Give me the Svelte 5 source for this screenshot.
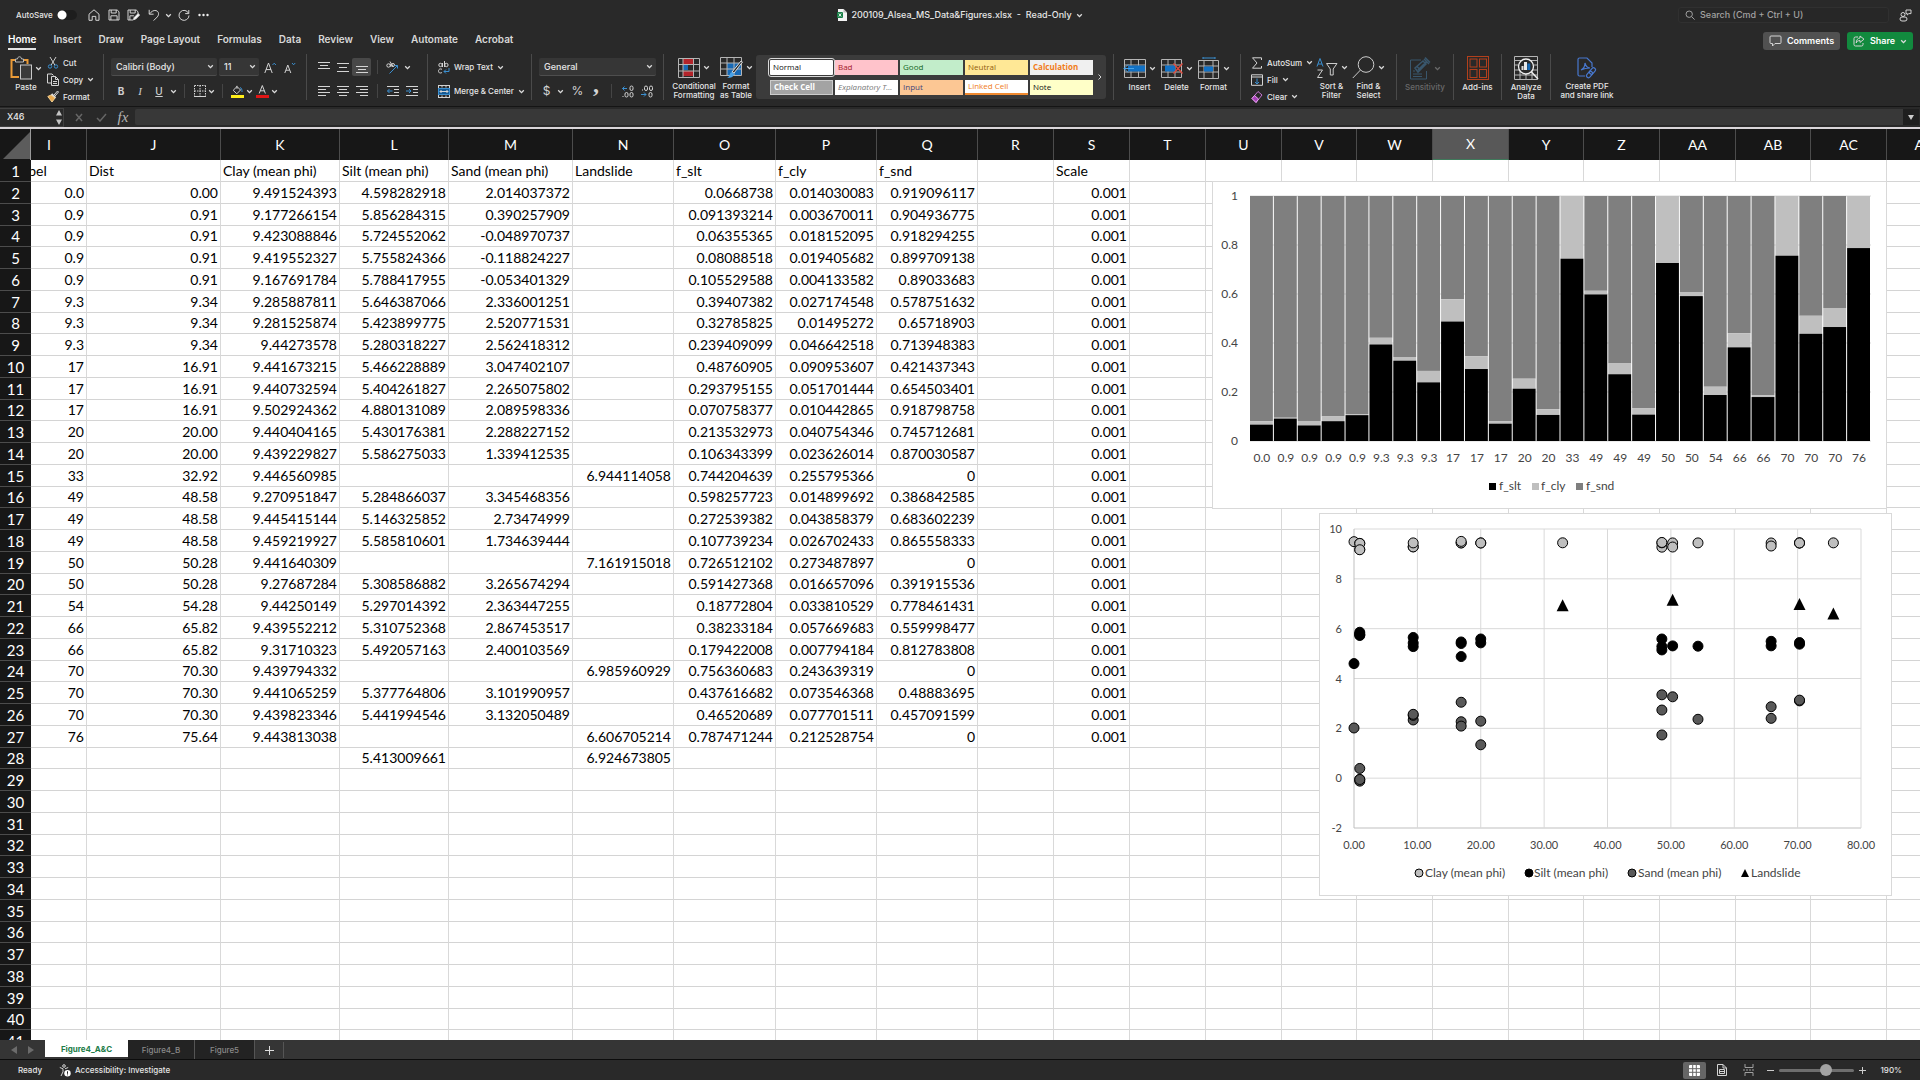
<script>
  const cols = [
    ['I', 56], ['J', 134], ['K', 119], ['L', 109], ['M', 124], ['N', 101], ['O', 102], ['P', 101],
    ['Q', 101], ['R', 76], ['S', 76], ['T', 76], ['U', 76], ['V', 75], ['W', 76], ['X', 76],
    ['Y', 75], ['Z', 76], ['AA', 76], ['AB', 75], ['AC', 76], ['AD', 76]
  ];

  const titles = ['Label', 'Dist', 'Clay (mean phi)', 'Silt (mean phi)', 'Sand (mean phi)', 'Landslide', 'f_slt', 'f_cly', 'f_snd', '', 'Scale'];

  // label, dist, clay, silt, sand, landslide, f_slt, f_cly, f_snd
  const data = `0.0|0.00|9.491524393|4.598282918|2.014037372||0.0668738|0.014030083|0.919096117
0.9|0.91|9.177266154|5.856284315|0.390257909||0.091393214|0.003670011|0.904936775
0.9|0.91|9.423088846|5.724552062|-0.048970737||0.06355365|0.018152095|0.918294255
0.9|0.91|9.419552327|5.755824366|-0.118824227||0.08088518|0.019405682|0.899709138
0.9|0.91|9.167691784|5.788417955|-0.053401329||0.105529588|0.004133582|0.89033683
9.3|9.34|9.285887811|5.646387066|2.336001251||0.39407382|0.027174548|0.578751632
9.3|9.34|9.281525874|5.423899775|2.520771531||0.32785825|0.01495272|0.65718903
9.3|9.34|9.44273578|5.280318227|2.562418312||0.239409099|0.046642518|0.713948383
17|16.91|9.441673215|5.466228889|3.047402107||0.48760905|0.090953607|0.421437343
17|16.91|9.440732594|5.404261827|2.265075802||0.293795155|0.051701444|0.654503401
17|16.91|9.502924362|4.880131089|2.089598336||0.070758377|0.010442865|0.918798758
20|20.00|9.440404165|5.430176381|2.288227152||0.213532973|0.040754346|0.745712681
20|20.00|9.439229827|5.586275033|1.339412535||0.106343399|0.023626014|0.870030587
33|32.92|9.446560985|||6.944114058|0.744204639|0.255795366|0
49|48.58|9.270951847|5.284866037|3.345468356||0.598257723|0.014899692|0.386842585
49|48.58|9.445415144|5.146325852|2.73474999||0.272539382|0.043858379|0.683602239
49|48.58|9.459219927|5.585810601|1.734639444||0.107739234|0.026702433|0.865558333
50|50.28|9.441640309|||7.161915018|0.726512102|0.273487897|0
50|50.28|9.27687284|5.308586882|3.265674294||0.591427368|0.016657096|0.391915536
54|54.28|9.44250149|5.297014392|2.363447255||0.18772804|0.033810529|0.778461431
66|65.82|9.439552212|5.310752368|2.867453517||0.38233184|0.057669683|0.559998477
66|65.82|9.31710323|5.492057163|2.400103569||0.179422008|0.007794184|0.812783808
70|70.30|9.439794332|||6.985960929|0.756360683|0.243639319|0
70|70.30|9.441065259|5.377764806|3.101990957||0.437616682|0.073546368|0.48883695
70|70.30|9.439823346|5.441994546|3.132050489||0.46520689|0.077701511|0.457091599
76|75.64|9.443813038|||6.606705214|0.787471244|0.212528754|0`
    .split('\n')
    .map((line) => line.split('|'));

  const rows = Array.from({ length: 41 }, (_, i) => {
    if (i === 0) return titles;
    if (i <= data.length) return [...data[i - 1], '', '0.001'];
    if (i === 27) return ['', '', '', '5.413009661', '', '6.924673805'];
    return [];
  });

  // stacked bar chart
  const bar = { x: 37, y: 14, w: 621, h: 245 };
  const pitch = bar.w / data.length;
  const by = (v) => bar.y + bar.h * (1 - v);
  const bars = data.map((d, i) => {
    const slt = +d[6];
    return { label: d[0], x: bar.x + i * pitch, slt, top: Math.min(1, slt + +d[7]) };
  });

  // scatter chart
  const sc = { x: 34, y: 15, w: 507, h: 299 };
  const sx = (v) => sc.x + (v / 80) * sc.w;
  const sy = (v) => sc.y + ((10 - v) / 12) * sc.h;
  const points = [2, 3, 4].flatMap((c, k) =>
    data.filter((d) => d[c] !== '').map((d) => ({ x: sx(+d[1]), y: sy(+d[c]), cls: ['clay', 'silt', 'sand'][k] }))
  );
  const slides = data.filter((d) => d[5]).map((d) => ({ x: sx(+d[1]), y: sy(+d[5]) }));
  const tri = (x, y) => `${x - 6},${y + 6} ${x},${y - 6} ${x + 6},${y + 6}`;

  const tabs = ['Home', 'Insert', 'Draw', 'Page Layout', 'Formulas', 'Data', 'Review', 'View', 'Automate', 'Acrobat'];
  const styles = [
    ['Normal', 'normal'], ['Bad', 'bad'], ['Good', 'good'], ['Neutral', 'neutral'], ['Calculation', 'calc'],
    ['Check Cell', 'check'], ['Explanatory T...', 'expl'], ['Input', 'input'], ['Linked Cell', 'linked'], ['Note', 'note']
  ];
</script>

{#snippet chev()}
  <svg class="chev" width="7" height="7" viewBox="0 0 7 7"><path d="M1.2 2.2 3.5 4.6 5.8 2.2" /></svg>
{/snippet}

{#snippet lines(a, b, c, d)}
  <svg class="ic" width="12" height="13" viewBox="0 0 12 13">
    {#each [a, b, c, d].filter(Boolean) as [x, w, y]}<path d="M{x} {y}h{w}" />{/each}
  </svg>
{/snippet}

<div class="app">
  <header class="titlebar">
    <div class="quick">
      <label class="autosave">AutoSave <input type="checkbox" /></label>
      <button aria-label="Home"><svg class="ic" width="12" height="12" viewBox="0 0 12 12"><path d="M1 5.2 6 .8l5 4.4v6.1H7.8V7.4H4.2v3.9H1z" /></svg></button>
      <button aria-label="Save"><svg class="ic" width="12" height="12" viewBox="0 0 12 12"><path d="M1 1h8.2L11 2.8V11H1zM3.2 1v3h5V1M2.9 11V6.8h6.2V11" /></svg></button>
      <button aria-label="Save as"><svg class="ic" width="13" height="12" viewBox="0 0 13 12"><path d="M6 11H1V1h8.2L11 2.8v2M3.2 1v3h5V1M2.9 11V6.8h4" /><path d="m6.5 10.8.6-2.2 4-4 1.5 1.5-4 4z" fill="#fff" /></svg></button>
      <button aria-label="Undo"><svg class="ic" width="12" height="12" viewBox="0 0 12 12"><path d="M1.2.8v4.4h4.4M1.4 5C3.3 2.600 5.500 1 8 1.600c3 .8 3.300 4.200 1.200 6.400L5.600 11.600" /></svg></button>
      <button class="narrow" aria-label="Undo history">{@render chev()}</button>
      <button aria-label="Redo"><svg class="ic" width="12" height="12" viewBox="0 0 12 12"><path d="M10.800 1v3.600H7.200M10.600 4.400A5 5 0 1 0 11 6.500" /></svg></button>
      <button aria-label="More"><svg width="11" height="4" viewBox="0 0 11 4" fill="#eee"><circle cx="1.500" cy="2" r="1.200" /><circle cx="5.500" cy="2" r="1.200" /><circle cx="9.500" cy="2" r="1.200" /></svg></button>
    </div>
    <h1>
      <svg width="10" height="12" viewBox="0 0 10 12"><path d="M1 0h5.500L10 3.500V12H1z" fill="#f4f4f4" /><path d="M6.500 0 10 3.500H6.500z" fill="#bcbcbc" /><rect y="3" width="6" height="6" rx="1" fill="#1a8048" /><path d="m1.800 4.500 2.400 3M4.200 4.500l-2.400 3" stroke="#fff" stroke-width=".9" /></svg>
      <span>200109_Alsea_MS_Data&amp;Figures.xlsx&nbsp; - &nbsp;Read-Only</span>{@render chev()}
    </h1>
    <div class="right">
      <label class="search">
        <svg class="ic dim" width="10" height="10" viewBox="0 0 10 10"><circle cx="4.200" cy="4.200" r="3.200" /><path d="m6.600 6.600 3 3" /></svg>
        <input aria-label="Search" placeholder="Search (Cmd + Ctrl + U)" />
      </label>
      <button aria-label="Share status"><svg class="ic" width="13" height="13" viewBox="0 0 13 13"><circle cx="4" cy="5.500" r="2" /><rect x="1" y="8" width="7" height="4" rx="2" /><path d="M7 1h5v3.600H9.800L8.300 6V4.600H7z" /></svg></button>
    </div>
  </header>

  <nav class="tabs">
    {#each tabs as t, i}<button class:on={i === 0}>{t}</button>{/each}
    <div class="share">
      <button class="comments"><svg class="ic" width="13" height="12" viewBox="0 0 13 12"><path d="M2 1h9q1 0 1 1v5.500q0 1-1 1H6L3.500 11V8.500H2q-1 0-1-1V2q0-1 1-1z" /></svg>Comments</button>
      <button class="green"><svg class="ic" width="12" height="12" viewBox="0 0 12 12"><path d="M5 2H2.500Q1 2 1 3.500v6Q1 11 2.500 11h6Q10 11 10 9.500V8M7 1l4 3.200-4 3.200V5.500C5 5.500 4 6.500 3.200 8 3.300 5 4.800 3.100 7 3z" /></svg>Share {@render chev()}</button>
    </div>
  </nav>

  <section class="ribbon" aria-label="Home ribbon">
    <div class="group clip">
      <button class="big paste">
        <span class="pic"><svg width="22" height="24" viewBox="0 0 22 24" fill="none"><path d="M6 4H1.500v17H9M13 4h4.500v4" stroke="#e99a37" stroke-width="2" /><path d="M5.500 6V3h2C7.500 0 11.500 0 11.500 3h2v3z" stroke="#bbb" fill="#292929" /><rect x="10.500" y="9" width="11" height="14" fill="#3a3a3a" stroke="#c9c9c9" /></svg>{@render chev()}</span>
        <span class="lab">Paste</span>
      </button>
      <div class="stack">
        <button><svg width="12" height="13" viewBox="0 0 12 13" fill="none"><path d="M3 1l4.800 8M9 1 4.200 9" stroke="#ccc" /><circle cx="3" cy="10.500" r="1.700" stroke="#3b8fd0" /><circle cx="9" cy="10.500" r="1.700" stroke="#3b8fd0" /></svg>Cut</button>
        <button><svg class="ic" width="12" height="13" viewBox="0 0 12 13"><path d="M4 10H.5V1H5l1.500 1.500M4.500 3.500h4l3 3v6h-7zM8.500 3.500v3h3M6 8.500h4M6 10.500h4" /></svg>Copy {@render chev()}</button>
        <button><svg width="12" height="13" viewBox="0 0 12 13" fill="none"><path d="m7 5 3.500-4 1 1L8 6" stroke="#ddd" /><path d="m4.500 4 4 4" stroke="#ddd" stroke-width="2" /><path d="M4 5 .8 6.500 5 12l3-4z" fill="#e9a84c" stroke="#f2cf92" /></svg>Format</button>
      </div>
    </div>

    <div class="group font">
      <div class="line top">
        <span class="pick name"><select aria-label="Font"><option>Calibri (Body)</option></select>{@render chev()}</span>
        <span class="pick size"><select aria-label="Font size"><option>11</option></select>{@render chev()}</span>
        <button class="tool" aria-label="Increase font size"><svg class="ic" width="13" height="13" viewBox="0 0 13 13"><path d="M.8 12 4.500 2l3.700 10M2 8.600h5" /><path d="m8.500 4 1.700-1.800L11.900 4" stroke="#3b8fd0" /></svg></button>
        <button class="tool" aria-label="Decrease font size"><svg class="ic" width="12" height="13" viewBox="0 0 12 13"><path d="M.8 12 3.800 4l3 8M2 9.200h3.600" /><path d="m8 2 1.600 1.800L11.200 2" stroke="#3b8fd0" /></svg></button>
      </div>
      <div class="line bottom">
        <button class="tool fmt"><b>B</b></button>
        <button class="tool fmt"><i>I</i></button>
        <button class="tool fmt"><u>U</u></button>{@render chev()}
        <hr />
        <button class="tool" aria-label="Borders"><svg class="ic" width="12" height="12" viewBox="0 0 12 12"><path d="M.5.500h11M.5.500v11M11.500.500v11M6 .5v11M.5 6h11" stroke-dasharray="1.500 1" /><path d="M0 11.500h12" /></svg></button>{@render chev()}
        <hr />
        <button class="tool" aria-label="Fill color"><svg class="ic" width="13" height="13" viewBox="0 0 13 13"><path d="M6 .800v3M6 1.500 2.200 5.300l3.600 3.500L9.500 5z" /><path d="M9 2.500c1.500.5 2.200 2 2 4.500" stroke="#3b8fd0" /><path d="M0 10h13v3H0z" fill="#ffee1a" stroke="none" /></svg></button>{@render chev()}
        <button class="tool" aria-label="Font color"><svg class="ic" width="13" height="13" viewBox="0 0 13 13"><path d="M3.200 8.500 6.300.500l3.100 8M4.300 5.800h4" /><path d="M0 10h13v3H0z" fill="#e01515" stroke="none" /></svg></button>{@render chev()}
      </div>
    </div>

    <div class="group align">
      <div class="line top">
        <button class="tool sq" aria-label="Top align">{@render lines([0, 12, 1.500], [2, 8, 4.500], [0, 12, 7.500])}</button>
        <button class="tool sq" aria-label="Middle align">{@render lines([0, 12, 2.500], [2, 8, 6.500], [0, 12, 10.500])}</button>
        <button class="tool sq on" aria-label="Bottom align">{@render lines([0, 12, 5.500], [2, 8, 8.500], [0, 12, 11.500])}</button>
        <hr />
        <button class="tool sq" aria-label="Orientation"><svg class="ic" width="13" height="13" viewBox="0 0 13 13"><circle cx="2.500" cy="4.500" r="1.700" /><path d="M4 2.500 5 6M4 .5l3 5" /><circle cx="7" cy="4" r="1.500" /><path d="m3.500 12.500 8-8M8.500 4.500h3v3" stroke="#3b8fd0" /></svg></button>{@render chev()}
      </div>
      <div class="line bottom">
        <button class="tool sq" aria-label="Align left">{@render lines([0, 12, 1.500], [0, 8, 4.500], [0, 12, 7.500], [0, 8, 10.500])}</button>
        <button class="tool sq" aria-label="Center">{@render lines([0, 12, 1.500], [2, 8, 4.500], [0, 12, 7.500], [2, 8, 10.500])}</button>
        <button class="tool sq" aria-label="Align right">{@render lines([0, 12, 1.500], [4, 8, 4.500], [0, 12, 7.500], [4, 8, 10.500])}</button>
        <hr />
        <button class="tool sq" aria-label="Decrease indent"><svg class="ic" width="12" height="12" viewBox="0 0 12 12"><path d="M0 1.500h12M7 4.500h5M7 7.500h5M0 10.500h12" /><path d="M5.500 6H.500M2.500 4 .5 6l2 2" stroke="#3b8fd0" /></svg></button>
        <button class="tool sq" aria-label="Increase indent"><svg class="ic" width="12" height="12" viewBox="0 0 12 12"><path d="M0 1.500h12M7 4.500h5M7 7.500h5M0 10.500h12" /><path d="M0 6h5M3 4l2 2-2 2" stroke="#3b8fd0" /></svg></button>
      </div>
    </div>

    <div class="group wrap">
      <div class="line top"><button class="tool text"><svg class="ic" width="12" height="13" viewBox="0 0 12 13"><circle cx="2.500" cy="4" r="1.700" /><path d="M4.500 2v4M6.500 0v6M4 8.300C1 7 0 9.500.8 11.200 1.500 12.500 3 12 4 11.500" /><circle cx="8.400" cy="4" r="1.700" /><path d="M11 7v3.500H6M8 8.500l-2 2 2 2" stroke="#3b8fd0" /></svg>Wrap Text {@render chev()}</button></div>
      <div class="line bottom"><button class="tool text"><svg class="ic" width="12" height="13" viewBox="0 0 12 13"><rect x=".5" y=".5" width="11" height="12" /><path d="M4 .500v2M8 .500v2M4 10.500v2M8 10.500v2" /><rect x=".5" y="3.500" width="11" height="6" fill="#155a94" stroke="#3b8fd0" /><path d="M2 6.500h8M3.500 5 2 6.500 3.500 8M8.500 5 10 6.500 8.500 8" /></svg>Merge &amp; Center {@render chev()}</button></div>
    </div>

    <div class="group number">
      <div class="line top"><span class="pick general"><select aria-label="Number format"><option>General</option></select>{@render chev()}</span></div>
      <div class="line bottom">
        <button class="tool sym dollar">$</button>{@render chev()}
        <button class="tool sym">%</button>
        <button class="tool sym comma">,</button>
        <hr />
        <button class="tool dec" aria-label="Increase decimal"><svg class="ic" width="12" height="13" viewBox="0 0 12 13"><path d="M5 3.500H.5M2.500 1.500l-2 2 2 2" stroke="#3b8fd0" /><rect x="8" y="1" width="3" height="4.500" rx="1.500" /><rect x="3" y="7.500" width="3" height="4.500" rx="1.500" /><rect x="8" y="7.500" width="3" height="4.500" rx="1.500" /><path d="M.5 11.500h1" /></svg></button>
        <button class="tool dec" aria-label="Decrease decimal"><svg class="ic" width="12" height="13" viewBox="0 0 12 13"><rect x="3.500" y="1" width="3" height="4.500" rx="1.500" /><rect x="8.500" y="1" width="3" height="4.500" rx="1.500" /><path d="M1 5h1" /><path d="M0 9.500h5M3 7.500l2 2-2 2" stroke="#3b8fd0" /><rect x="8" y="7.500" width="3" height="4.500" rx="1.500" /></svg></button>
      </div>
    </div>

    <div class="group cond">
      <button class="big">
        <span class="pic"><svg width="22" height="20" viewBox="0 0 22 20" fill="none"><path d="M5 1h10v5H5zM5 13h10v5H5z" fill="#b3242a" /><path d="M5 7h5v5H5z" fill="#1769b5" /><path d="M.5.500h21v19H.500zM.5 6.500h21M.5 13h21M5 .5v19M15.500.500v19" stroke="#b5b5b5" /></svg>{@render chev()}</span>
        <span class="lab">Conditional<br />Formatting</span>
      </button>
      <button class="big">
        <span class="pic"><svg width="23" height="22" viewBox="0 0 23 22" fill="none"><path d="M7 6h14v12H7z" fill="#1769b5" /><path d="M.5.500h21v18H.500zM.5 6h21M.5 12h21M7 .5v18M14 .5v18" stroke="#b5b5b5" /><path d="m12 15 9-11 1.500 1-8.500 11z" fill="#292929" stroke="#ddd" /><path d="M7 20.500c3 0 2-5 5-5.500l2 2c0 3-4 4.500-7 3.500z" fill="#4aa3e8" /></svg>{@render chev()}</span>
        <span class="lab">Format<br />as Table</span>
      </button>
    </div>

    <div class="gallery">
      <div class="swatches">
        {#each styles as [name, cls]}<button class={cls}>{name}</button>{/each}
      </div>
      <button class="more" aria-label="More styles"><svg class="ic" width="6" height="8" viewBox="0 0 6 8"><path d="m1.500 1.500 2.500 2.500-2.500 2.500" /></svg></button>
    </div>

    <div class="group cells">
      <button class="big">
        <span class="pic"><svg width="23" height="19" viewBox="0 0 23 19" fill="none"><path d="M1.500.500h21v18h-21zM1.500 6h21M1.500 13h21M8 .5v18M15.500.500v18" stroke="#b5b5b5" /><path d="M5 6.500h17v6H5z" fill="#1271c4" /><path d="M11 9.500H1M5 5.500l-4 4 4 4" stroke="#4aa3e8" /></svg>{@render chev()}</span>
        <span class="lab">Insert</span>
      </button>
      <button class="big">
        <span class="pic"><svg width="22" height="19" viewBox="0 0 22 19" fill="none"><path d="M.5.500h20v18H.500zM.5 6h20M.5 13h20M7 .5v18M14 .5v18" stroke="#b5b5b5" /><path d="M4 6.500h10v6H4z" fill="#1271c4" /><path d="m12.500 4.500 9 10M21.500 4.500l-9 10" stroke="#e0493c" stroke-width="1.300" /></svg>{@render chev()}</span>
        <span class="lab">Delete</span>
      </button>
      <button class="big">
        <span class="pic"><svg width="22" height="22" viewBox="0 0 22 22" fill="none"><path d="M5 1h12M5 0v2M17 0v2" stroke="#3b8fd0" /><path d="M.5 3.500h20v18H.500zM.5 9h20M.5 15h20M6 3.500v18M15 3.500v18" stroke="#b5b5b5" /><path d="M6 9.500h9v5H6z" fill="#1271c4" /></svg>{@render chev()}</span>
        <span class="lab">Format</span>
      </button>
    </div>

    <div class="group editing">
      <div class="stack">
        <button><svg class="ic" width="12" height="12" viewBox="0 0 12 12"><path d="M10.500 3V.800h-9L6 6l-4.500 5.200h9V9" /></svg>AutoSum {@render chev()}</button>
        <button><svg class="ic" width="12" height="12" viewBox="0 0 12 12"><path d="M.5.800h11v10.500H.500zM.5 3h11" /><path d="M6 4.500V10M4 8l2 2 2-2" stroke="#3b8fd0" /></svg>Fill {@render chev()}</button>
        <button><svg width="12" height="12" viewBox="0 0 12 12" fill="none"><path d="m1 7.500 6-7 4 3.500-6 7.500z" stroke="#c774d6" /><path d="m1 7.500 2.500-3 4 3.500L5 11.500z" fill="#a63fb8" stroke="#e6a6ee" /></svg>Clear {@render chev()}</button>
      </div>
      <button class="big">
        <span class="pic"><svg width="22" height="22" viewBox="0 0 22 22" fill="none"><path d="M1 9.500 4 1.500l3 8M2 7h4" stroke="#3b8fd0" /><path d="M1.500 13H6.500L1.500 20.500H6.500M10.500 6.500h10.500l-3.800 5.500v6h-2.900v-6z" stroke="#ccc" /></svg>{@render chev()}</span>
        <span class="lab">Sort &amp;<br />Filter</span>
      </button>
      <button class="big">
        <span class="pic"><svg width="23" height="23" viewBox="0 0 23 23" fill="none" stroke="#ccc"><circle cx="14" cy="8.500" r="7.800" /><path d="M8.500 14 .8 22" /></svg>{@render chev()}</span>
        <span class="lab">Find &amp;<br />Select</span>
      </button>
    </div>

    <div class="group solo sens">
      <button class="big" disabled>
        <span class="pic"><svg width="21" height="23" viewBox="0 0 21 23" fill="none" stroke="#39566c"><path d="M11 3H.500v19h16v-8" /><path d="M3 14h2M3 17h9M3 19.500h9" /><path d="m5 11 8-7 3 3-8 8zM8 13l9-9M6.500 9l4 4M14 2l5 5M15 .5l5 5" stroke-width="1.500" /></svg>{@render chev()}</span>
        <span class="lab">Sensitivity</span>
      </button>
    </div>
    <div class="group solo adds">
      <button class="big">
        <span class="pic"><svg width="22" height="24" viewBox="0 0 22 24" fill="none" stroke="#b3401c"><rect x=".5" y=".5" width="21" height="23" /><rect x="3" y="3" width="7" height="8" /><rect x="12.500" y="3" width="7" height="8" /><rect x="3" y="13.500" width="7" height="8" /><rect x="12.500" y="13.500" width="7" height="8" /></svg></span>
        <span class="lab">Add-ins</span>
      </button>
    </div>
    <div class="group solo anal">
      <button class="big">
        <span class="pic"><svg width="25" height="24" viewBox="0 0 25 24" fill="none" stroke="#b5b5b5"><path d="M.5.500h23v23H.500zM.5 4.500h23M.5 9h23M.5 14h23M.5 19h23M6 14v9.500M12 14v9.500M18 14v9.500" /><circle cx="12" cy="10.500" r="7.500" fill="#292929" stroke="#eee" stroke-width="1.300" /><path d="m17.500 16 6.500 7" stroke="#eee" stroke-width="1.500" /><path d="M8.500 10v4" stroke="#ddd" stroke-width="2" /><path d="M11.500 6v8" stroke="#e9e9e9" stroke-width="3" /><path d="M14.800 7.500v6.500" stroke="#1769b5" stroke-width="3" /></svg></span>
        <span class="lab">Analyze<br />Data</span>
      </button>
    </div>
    <div class="group solo pdf">
      <button class="big">
        <span class="pic"><svg width="20" height="22" viewBox="0 0 20 22" fill="none" stroke="#4878cf" stroke-width="1.200"><path d="M8 19H2.500Q1 19 1 17.500v-15Q1 1 2.500 1H10l5 5v4" /><path d="M4 13c2-1 4-4 4-7 1 4 2.500 5 5 5-3 0-6 .5-9 2z" /><rect x="13.500" y="10.500" width="4" height="7" rx="2" transform="rotate(40 15.500 14)" /><rect x="10.500" y="14" width="4" height="7" rx="2" transform="rotate(40 12.500 17.500)" /></svg></span>
        <span class="lab">Create PDF<br />and share link</span>
      </button>
    </div>
  </section>

  <div class="formula">
    <div class="namebox">
      <input aria-label="Name box" value="X46" />
      <svg width="6" height="15" viewBox="0 0 6 15" fill="#c4c4c4"><path d="M3 0 6 5.500H0zM3 15l3-5.500H0z" /></svg>
    </div>
    <button class="fbtn" aria-label="Cancel"><svg width="8" height="9" viewBox="0 0 8 9"><path d="m1 1 6 7M7 1 1 8" stroke="#666" stroke-width="1.500" /></svg></button>
    <button class="fbtn" aria-label="Enter"><svg width="11" height="9" viewBox="0 0 11 9" fill="none"><path d="m1 5 3 3L10 1" stroke="#666" stroke-width="1.500" /></svg></button>
    <button class="fbtn fx">fx</button>
    <input class="fin" aria-label="Formula" />
    <button class="expand" aria-label="Expand formula bar"><svg width="6" height="5" viewBox="0 0 6 5" fill="#ccc"><path d="M0 0h6L3 5z" /></svg></button>
  </div>

  <main class="sheet">
    <table>
      <colgroup>
        <col style="width:31px" />
        {#each cols as c}<col style="width:{c[1]}px" />{/each}
      </colgroup>
      <thead>
        <tr>
          <th class="corner"><svg width="27" height="27" viewBox="0 0 27 27"><path d="M27 0v27H0z" fill="#5c5c5c" /></svg></th>
          {#each cols as c}<th class:sel={c[0] === 'X'}><span>{c[0]}</span></th>{/each}
        </tr>
      </thead>
      <tbody>
        {#each rows as r, i}
          <tr class:heads={i === 0}>
            <th>{i + 1}</th>
            {#each cols as _, k}<td><span>{r[k] ?? ''}</span></td>{/each}
          </tr>
        {/each}
      </tbody>
    </table>

    <figure class="chart one">
      <svg width="673" height="326" viewBox="0 0 673 326">
        {#each [0, 0.2, 0.4, 0.6, 0.8, 1] as v}
          <path class="grid" d="M{bar.x} {by(v)}h{bar.w}" />
          <text class="end" x="25" y={by(v) + 4}>{v}</text>
        {/each}
        {#each bars as b}
          <rect class="snd" x={b.x} y={bar.y} width={pitch - 1} height={by(b.top) - bar.y} />
          <rect class="cly" x={b.x} y={by(b.top)} width={pitch - 1} height={by(b.slt) - by(b.top)} />
          <rect class="slt" x={b.x} y={by(b.slt)} width={pitch - 1} height={by(0) - by(b.slt)} />
          <text class="mid" x={b.x + pitch / 2} y="280">{b.label}</text>
        {/each}
        <rect class="slt" x="276" y="301" width="7" height="7" /><text x="286" y="308">f_slt</text>
        <rect class="cly" x="319" y="301" width="7" height="7" /><text x="328" y="308">f_cly</text>
        <rect class="snd" x="363" y="301" width="7" height="7" /><text x="373" y="308">f_snd</text>
      </svg>
    </figure>

    <figure class="chart two">
      <svg width="571" height="381" viewBox="0 0 571 381">
        {#each [10, 8, 6, 4, 2, 0, -2] as v}
          <path class="grid" class:axis={v === -2} d="M{sc.x} {sy(v)}h{sc.w}" />
          <text class="end" x="22" y={sy(v) + 4}>{v}</text>
        {/each}
        {#each [0, 10, 20, 30, 40, 50, 60, 70, 80] as v}
          <path class="grid" class:axis={v === 0} d="M{sx(v)} {sc.y}v{sc.h}" />
          <text class="mid" x={sx(v)} y="335">{v.toFixed(2)}</text>
        {/each}
        {#each points as p}<circle class={p.cls} cx={p.x} cy={p.y} r="5" />{/each}
        {#each slides as p}<polygon points={tri(p.x, p.y)} />{/each}
        <g class="legend">
          <circle class="clay" cx="99" cy="359" r="4" /><text x="105" y="363">Clay (mean phi)</text>
          <circle class="silt" cx="209" cy="359" r="4" /><text x="214" y="363">Silt (mean phi)</text>
          <circle class="sand" cx="312" cy="359" r="4" /><text x="318" y="363">Sand (mean phi)</text>
          <polygon points="421,363 425,355 429,363" /><text x="431" y="363">Landslide</text>
        </g>
      </svg>
    </figure>
  </main>

  <div class="sheettabs">
    <button class="arrow" aria-label="Previous sheet"><svg width="6" height="8" viewBox="0 0 6 8"><path d="M6 0v8L0 4z" fill="#6b6b6b" /></svg></button>
    <button class="arrow" aria-label="Next sheet"><svg width="6" height="8" viewBox="0 0 6 8"><path d="M0 0v8l6-4z" fill="#6b6b6b" /></svg></button>
    <button class="tab a on">Figure4_A&amp;C</button>
    <button class="tab b">Figure4_B</button>
    <button class="tab c">Figure5</button>
    <button class="add" aria-label="Add sheet"><svg width="9" height="9" viewBox="0 0 9 9"><path d="M4.500 0v9M0 4.500h9" stroke="#ddd" /></svg></button>
  </div>

  <footer class="status">
    <span>Ready</span>
    <button class="acc"><svg class="ic" width="12" height="13" viewBox="0 0 12 13"><circle cx="5" cy="2" r="1.300" /><path d="M.8 3.500 4 4.800v3L2 12M9.200 3.500 6 4.800" /><circle cx="8.500" cy="9.300" r="3.200" fill="#fff" stroke="none" /><path d="M8.500 7.300v2.500M8.500 10.500v.8" stroke="#222" /></svg>Accessibility: Investigate</button>
    <div class="views">
      <button class="view on" aria-label="Normal view"><svg width="11" height="11" viewBox="0 0 11 11"><rect width="11" height="11" rx="1" fill="#fff" /><path d="M3.700 0v11M7.300 0v11M0 3.700h11M0 7.300h11" stroke="#666" /></svg></button>
      <button class="view" aria-label="Page layout view"><svg class="ic" width="10" height="12" viewBox="0 0 10 12"><path d="M.5.500H6L9.500 4v7.500h-9zM6 .5V4h3.500M2.500 5.500h5v4h-5zM2.500 7.500h5" /></svg></button>
      <button class="view" aria-label="Page break view"><svg class="ic dim" width="12" height="12" viewBox="0 0 12 12"><path d="M2 0v3.500h8V0M2 12V8.500h8V12" /><path d="M0 6h12" stroke-dasharray="2 1" /></svg></button>
    </div>
    <button class="step" aria-label="Zoom out"><svg width="7" height="7" viewBox="0 0 7 7"><path d="M0 3.500h7" stroke="#ccc" /></svg></button>
    <input class="zoom" type="range" min="0" max="100" value="65" aria-label="Zoom" />
    <button class="step" aria-label="Zoom in"><svg width="7" height="7" viewBox="0 0 7 7"><path d="M0 3.500h7M3.500 0v7" stroke="#ccc" /></svg></button>
    <span class="pct">190%</span>
  </footer>
</div>

<style>
  :global(body) { margin: 0; background: #292929; }
  * { box-sizing: border-box; }
  .app {
    display: flex; flex-direction: column; height: 100vh; overflow: hidden;
    font: 500 8px/10px Inter, 'Liberation Sans', sans-serif; color: #e6e6e6; background: #292929;
  }
  button {
    display: flex; align-items: center; justify-content: center; flex: none;
    margin: 0; padding: 0; border: 0; background: none; color: inherit; font: inherit; white-space: nowrap;
  }
  input, select { margin: 0; padding: 0; border: 0; outline: 0; background: none; color: inherit; font: inherit; min-width: 0; }
  select { appearance: none; flex: 1; }
  svg { flex: none; display: block; }
  .ic { fill: none; stroke: #d4d4d4; stroke-width: 1; }
  .ic.dim { stroke: #a0a0a0; }
  .chev { fill: none; stroke: #dcdcdc; stroke-width: 1.3; }
  hr { width: 1px; height: 14px; margin: 0; border: 0; background: #454545; }

  .titlebar { display: grid; grid-template-columns: 1fr auto 1fr; align-items: center; height: 30px; flex: none; }
  .quick { display: flex; align-items: center; gap: 8px; padding-left: 16px; }
  .quick button { width: 12px; }
  .quick button.narrow { width: 7px; margin: 0 -2px 0 -3px; }
  .autosave { display: flex; align-items: center; gap: 4px; margin-right: 3px; }
  .autosave input { appearance: none; width: 20px; height: 10px; border-radius: 5px; background: radial-gradient(circle at 5px 5px, #fff 4px, #1d1d1d 5px); }
  h1 { display: flex; align-items: center; gap: 4px; margin: 0; font: inherit; font-size: 9px; }
  .right { display: flex; justify-content: flex-end; align-items: center; gap: 10px; padding-right: 8px; }
  .search { display: flex; align-items: center; gap: 5px; width: 211px; height: 16px; padding-left: 6px; border: 1px solid #303030; border-radius: 3px; font-size: 9px; background: #272727; }
  .search input { flex: 1; }
  .search input::placeholder { color: #a2a2a2; opacity: 1; }

  .tabs { display: flex; gap: 17px; height: 22px; padding: 0 7px 0 8px; flex: none; font-size: 10px; }
  .tabs > button { height: 20px; border-bottom: 2px solid transparent; font-weight: 600; color: #d8d8d8; }
  .tabs > button.on { border-color: #e4e4e4; color: #fff; }
  .share { display: flex; gap: 7px; margin-left: auto; padding-top: 2px; font-size: 9px; }
  .share button { height: 18px; gap: 5px; border-radius: 3px; color: #fff; font-weight: 600; }
  .comments { width: 77px; background: #515151; }
  .green { width: 66px; background: #128a3e; }

  .ribbon { display: flex; height: 54px; padding: 2px 0; flex: none; }
  .group { display: flex; flex: none; height: 46px; border-right: 1px solid #4a4a4a; }
  .big { flex-direction: column; justify-content: flex-start; padding-top: 2px; }
  .pic { display: flex; align-items: center; justify-content: center; gap: 3px; height: 24px; }
  .lab { line-height: 9px; margin-top: 3px; text-align: center; }
  .big:disabled { opacity: 1; color: #6a6a6a; }
  .big:disabled .chev { stroke: #6a6a6a; }
  .stack { display: flex; flex-direction: column; gap: 4px; padding-top: 2px; align-items: flex-start; }
  .stack button { gap: 4px; height: 13px; }
  .clip { width: 104px; padding-left: 10px; }
  .paste { width: 32px; margin-right: 5px; }
  .font, .align, .wrap, .number { flex-direction: column; }
  .line { display: flex; align-items: center; flex: none; }
  .line.top { height: 26px; }
  .line.bottom { height: 22px; }
  .font { width: 203px; padding-left: 7px; }
  .pick { display: flex; align-items: center; height: 18px; padding: 0 3px 0 5px; border-radius: 2px; background: #363636; border-bottom: 1px solid #4e4e4e; font-size: 9px; }
  .pick.name { width: 106px; margin-right: 2px; }
  .pick.size { width: 40px; margin-right: 2px; }
  .pick.general { width: 117px; }
  .tool { min-width: 13px; height: 18px; }
  .font .top .tool { width: 19px; }
  .font .bottom .chev { margin: 0 2px; }
  .font .bottom hr { margin: 0 7px 0 5px; }
  .font .bottom .tool { margin-left: 1px; }
  .tool.fmt { width: 18px; font-size: 10px; color: #cfcfcf; }
  .fmt i { font-family: 'Liberation Serif', serif; font-size: 11px; }
  .fmt b { font-weight: 700; }
  .align { width: 121px; padding-left: 7px; }
  .align .sq { width: 19px; border-radius: 2px; }
  .align .sq.on { background: #484848; }
  .align hr { margin: 0 5px 0 6px; }
  .align .chev { margin-left: 2px; }
  .wrap { width: 104px; padding-left: 10px; }
  .text { gap: 4px; }
  .number { width: 132px; padding-left: 7px; }
  .sym { width: 17px; font-size: 12px; font-weight: 400; color: #d4d4d4; }
  .sym.dollar { width: 15px; }
  .sym.comma { width: 20px; padding-bottom: 14px; font: 700 24px/10px 'Liberation Serif', serif; }
  .number .bottom > .chev { margin: 0 5px 0 3px; }
  .number hr { margin: 0 9px 0 5px; }
  .dec { margin-right: 6px; }
  .cond { width: 92px; padding-left: 8px; border: 0; }
  .cond .big { width: 44px; }
  .cond .big + .big { width: 40px; }

  .gallery { display: flex; flex: none; width: 350px; height: 44px; margin: 1px 7px 0 0; padding-left: 14px; align-items: center; background: #3b3b3b; border-radius: 3px; }
  .swatches { display: grid; grid-template-columns: repeat(5, 63px); grid-auto-rows: 15px; column-gap: 2px; row-gap: 5px; }
  .swatches button { justify-content: flex-start; padding-left: 3px; background: #fff; color: #111; font: 500 8px/10px 'Open Sans', sans-serif; }
  .swatches .normal { outline: 1px solid #d9d9d9; outline-offset: 1px; border-radius: 1px; }
  .swatches .bad { background: #ffc3cb; color: #a3182a; }
  .swatches .good { background: #c2edca; color: #13661f; }
  .swatches .neutral { background: #ffe896; color: #93600c; }
  .swatches .calc { background: #f0f0f0; color: #f07c1a; font-weight: 700; }
  .swatches .check { background: #a3a3a3; color: #fff; font-weight: 700; border: 1px solid #555; outline: 1px solid #ccc; outline-offset: -1px; }
  .swatches .expl { color: #777; font-style: italic; }
  .swatches .input { background: #fcc794; color: #44447c; }
  .swatches .linked { color: #f07c1a; border-bottom: 2px solid #f08a30; }
  .swatches .note { background: #ffffc8; }
  .more { width: 14px; height: 43px; }
  .cells { width: 128px; padding-left: 7px; border-left: 1px solid #4a4a4a; }
  .cells .big, .editing .big { width: 37px; }
  .editing { width: 156px; padding-left: 10px; }
  .editing .stack { width: 62px; }
  .sens { width: 57px; }
  .adds { width: 48px; }
  .anal { width: 49px; }
  .pdf { width: 72px; border: 0; }
  .solo .big { width: 100%; }

  .formula { display: flex; align-items: center; height: 23px; flex: none; border-top: 1px solid #151515; border-bottom: 2px solid #d9d5d9; background: #292929; }
  .namebox { display: flex; align-items: center; width: 64px; height: 19px; padding: 0 1px 0 7px; border: 1px solid #404040; border-left: 0; font-size: 9px; }
  .namebox input { flex: 1; }
  .fbtn { width: 22px; }
  .fbtn:nth-of-type(1) { margin-left: 4px; }
  .fx { font: italic 15px/14px 'Liberation Serif', serif; color: #b5b5b5; margin-right: 1px; }
  .fin { flex: 1; height: 16px; background: #383838; border-radius: 2px 0 0 2px; }
  .expand { width: 16px; height: 16px; margin-right: 1px; background: #1f1f1f; }

  .sheet { position: relative; flex: 1; min-height: 0; overflow: hidden; background: #fff; }
  table { table-layout: fixed; width: 0; border-collapse: separate; border-spacing: 0; font: 400 14px/20px Lato, sans-serif; color: #000; }
  tr { height: 22px; }
  tbody tr:nth-child(4n) { height: 21px; }
  th, td { padding: 0; border-right: 1px solid #d9d9d9; border-bottom: 1px solid #d4d4d4; white-space: nowrap; overflow: hidden; line-height: 20px; height: inherit; }
  td { text-align: right; padding-right: 2px; }
  .heads td { text-align: left; padding: 0 0 0 2px; }
  td span, th span { display: block; }
  td:nth-child(2) span, thead th:nth-child(2) span { margin-left: -19px; }
  th { background: #171717; color: #fff; font-weight: 400; font-size: 15px; text-align: center; border-color: #4c4c4c; }
  tbody th { border-right: 0; }
  thead tr { height: 31px; }
  thead th { border-bottom: 0; font-size: 14px; }
  thead th.sel { background: #585858; border-bottom: 1px solid #3f7a5b; }
  th.corner { border-color: #999; }
  th.corner svg { margin: 2px 0 0 3px; }

  .chart { position: absolute; margin: 0; background: #fff; border: 1px solid #d9d9d9; font: 400 12px/14px Lato, sans-serif; }
  .chart.one { left: 1212px; top: 52px; }
  .chart.two { left: 1319px; top: 384px; font-size: 11px; }
  .chart text { fill: #444; }
  .legend { font-size: 12px; }
  .end { text-anchor: end; }
  .mid { text-anchor: middle; }
  .grid { stroke: #d9d9d9; stroke-width: 1; }
  .grid.axis { stroke: #bfbfbf; }
  .snd { fill: #7f7f7f; }
  .cly { fill: #bfbfbf; }
  .slt { fill: #000; }
  circle.clay { fill: #bfbfbf; stroke: #000; }
  circle.silt { fill: #000; stroke: #000; }
  circle.sand { fill: #595959; stroke: #000; }

  .sheettabs { display: flex; height: 20px; flex: none; background: #353535; border-bottom: 1px solid #0c0c0c; }
  .arrow { width: 17px; }
  .arrow:first-child { margin-left: 5px; }
  .arrow + .arrow { margin-right: 6px; }
  .tab { height: 19px; background: #232323; color: #8a8a8a; border-right: 1px solid #555; }
  .tab.on { height: 17px; background: #fff; color: #1c7c47; font-weight: 700; border: 0; }
  .tab.a { width: 83px; }
  .tab.b { width: 67px; }
  .tab.c { width: 60px; }
  .add { width: 29px; height: 16px; margin-top: 2px; border-right: 1px solid #555; }

  .status { display: flex; align-items: center; height: 20px; flex: none; padding: 0 18px; background: #292929; }
  .acc { gap: 4px; margin-left: 17px; }
  .views { display: flex; gap: 4px; margin: 0 4px 0 auto; }
  .view { width: 23px; height: 17px; border-radius: 2px; }
  .view.on { background: #666; }
  .step { width: 13px; }
  .zoom { appearance: none; width: 75px; height: 12px; margin: 0 2px; }
  .zoom::-webkit-slider-runnable-track { height: 3px; border-radius: 2px; background: #6e6e6e; }
  .zoom::-webkit-slider-thumb { appearance: none; width: 12px; height: 12px; margin-top: -5px; border-radius: 50%; background: #a3a3a3; }
  .pct { width: 33px; text-align: right; }
</style>
